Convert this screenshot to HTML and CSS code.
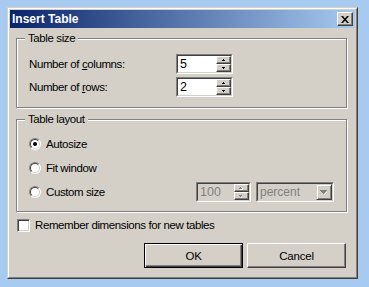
FILE: index.html
```html
<!DOCTYPE html>
<html>
<head>
<meta charset="utf-8">
<link rel="stylesheet" href="styles.css">
</head>
<body>
<div class="window">
  <div class="window-inner">
    <div class="titlebar">
      <span class="title">Insert Table</span>
      <span class="close"><svg width="8" height="7" viewBox="0 0 8 7"><path d="M0 0h2l2 2.4L6 0h2L5 3.5 8 7H6L4 4.6 2 7H0l3-3.5z" fill="#000"/></svg></span>
    </div>
    <div class="content">
      <div class="group g1">
        <div class="legend">Table size</div>
        <div class="fields">
          <span>Number of <u>c</u>olumns:</span>
          <div class="spin">
            <div class="spin-inner">
              <span class="spin-val">5</span>
              <div class="spin-btns">
                <span class="sbtn"><svg width="3" height="2" viewBox="0 0 3 2"><path d="M1 0h1v1h1v1H0V1h1z" fill="#000"/></svg></span>
                <span class="sbtn"><svg width="3" height="2" viewBox="0 0 3 2"><path d="M0 0h3v1H2v1H1V1H0z" fill="#000"/></svg></span>
              </div>
            </div>
          </div>
          <span>Number of <u>r</u>ows:</span>
          <div class="spin">
            <div class="spin-inner">
              <span class="spin-val">2</span>
              <div class="spin-btns">
                <span class="sbtn"><svg width="3" height="2" viewBox="0 0 3 2"><path d="M1 0h1v1h1v1H0V1h1z" fill="#000"/></svg></span>
                <span class="sbtn"><svg width="3" height="2" viewBox="0 0 3 2"><path d="M0 0h3v1H2v1H1V1H0z" fill="#000"/></svg></span>
              </div>
            </div>
          </div>
        </div>
      </div>
      <div class="group g2">
        <div class="legend">Table layout</div>
        <div class="options">
          <div class="opt"><span class="radio checked"></span><span>Autosize</span></div>
          <div class="opt"><span class="radio"></span><span>Fit window</span></div>
          <div class="opt custom">
            <div class="opt-label"><span class="radio"></span><span>Custom size</span></div>
            <div class="spin small disabled">
              <div class="spin-inner">
                <span class="spin-val">100</span>
                <div class="spin-btns">
                  <span class="sbtn"><svg width="4" height="3" viewBox="0 0 4 3"><path d="M1 0h1v1h1v1H0V1h1z" fill="#808080"/><path d="M3 1h1v2H1V2h2z" fill="#fff"/></svg></span>
                  <span class="sbtn"><svg width="4" height="3" viewBox="0 0 4 3"><path d="M0 0h3v1H2v1H1V1H0z" fill="#808080"/><path d="M3 1h1v0H3zM2 2h1v1H2z" fill="#fff"/></svg></span>
                </div>
              </div>
            </div>
            <div class="combo">
              <div class="combo-inner">
                <span class="combo-val">percent</span>
                <span class="combo-btn"><svg width="8" height="5" viewBox="0 0 8 5"><path d="M0 0h7v1H6v1H5v1H4v1H3V3H2V2H1V1H0z" fill="#808080"/><path d="M7 1h1v0zM6 2h1v1H6zM5 3h1v1H5zM4 4h1v1H4z" fill="#fff"/></svg></span>
              </div>
            </div>
          </div>
        </div>
      </div>
      <div class="check-row"><span class="checkbox"></span><span>Remember dimensions for new tables</span></div>
      <div class="buttons">
        <button class="btn default">OK</button>
        <button class="btn">Cancel</button>
      </div>
    </div>
  </div>
</div>
</body>
</html>
```
FILE: styles.css
```css
* { box-sizing: border-box; }
html, body { margin: 0; }
body {
  width: 369px;
  height: 287px;
  overflow: hidden;
  background: #a6caf0;
  padding: 7px 0 0 7px;
  font-family: "Liberation Sans", Arial, sans-serif;
  font-size: 11.5px;
  letter-spacing: -0.4px;
  color: #000;
}
.window {
  width: 351px;
  height: 272px;
  background: #d4d0c8;
  border: 1px solid;
  border-color: #d4d0c8 #404040 #404040 #d4d0c8;
}
.window-inner {
  height: 100%;
  border: 1px solid;
  border-color: #fff #808080 #808080 #fff;
  padding: 1px;
}
.titlebar {
  height: 18px;
  background: linear-gradient(to right, #0a246a, #a6caf0);
  display: flex;
  align-items: center;
  justify-content: space-between;
  padding: 0 2px;
}
.title {
  color: #fff;
  font-weight: bold;
  font-size: 12px;
  letter-spacing: 0;
}
.close {
  width: 16px;
  height: 14px;
  background: #d4d0c8;
  border: 1px solid;
  border-color: #fff #404040 #404040 #fff;
  box-shadow: inset -1px -1px 0 #808080;
  display: flex;
  align-items: center;
  justify-content: center;
  padding-right: 1px;
}
.close svg { display: block; }
.content {
  padding: 0 8px 0 6px;
}
.group {
  border: 1px solid #808080;
  box-shadow: 1px 1px 0 #fff, inset 1px 1px 0 #fff;
}
.g1 { margin-top: 10px; height: 70px; }
.g2 { margin-top: 11px; height: 93px; }
.legend {
  display: table;
  margin: -8px 0 0 8px;
  padding: 0 3px;
  background: #d4d0c8;
  line-height: 14px;
}
.fields {
  display: grid;
  grid-template-columns: 147px 57px;
  row-gap: 3px;
  align-items: center;
  margin: 9px 0 0 12px;
}
.spin {
  height: 20px;
  border: 1px solid;
  border-color: #808080 #fff #fff #808080;
  background: #fff;
}
.spin-inner {
  height: 100%;
  border: 1px solid;
  border-color: #404040 #d4d0c8 #d4d0c8 #404040;
  display: flex;
  align-items: stretch;
}
.spin-val {
  flex: 1;
  padding-left: 2px;
  font-size: 12.5px;
  line-height: 16px;
  letter-spacing: 0;
}
.spin-btns {
  width: 15px;
  display: flex;
  flex-direction: column;
}
.sbtn {
  flex: 1;
  background: #d4d0c8;
  border: 1px solid;
  border-color: #fff #404040 #404040 #fff;
  box-shadow: inset -1px -1px 0 #808080;
  display: flex;
  align-items: center;
  justify-content: center;
  padding-right: 1px;
}
.sbtn svg { display: block; }
.spin.small { width: 55px; }
.spin.disabled { background: #d4d0c8; }
.spin.disabled .spin-val { color: #808080; }
.options {
  display: flex;
  flex-direction: column;
  gap: 4px;
  margin: 8px 0 0 12px;
}
.opt {
  height: 20px;
  display: flex;
  align-items: center;
  gap: 5px;
}
.opt.custom { gap: 0; }
.opt-label {
  width: 167px;
  display: flex;
  align-items: center;
  gap: 5px;
}
.radio {
  position: relative;
  width: 12px;
  height: 12px;
  border-radius: 50%;
  border: 1px solid;
  border-color: #808080 #fff #fff #808080;
  background: #fff;
  flex: none;
}
.radio::before {
  content: "";
  position: absolute;
  inset: 0;
  border-radius: 50%;
  border: 1px solid;
  border-color: #404040 #d4d0c8 #d4d0c8 #404040;
}
.radio.checked::after {
  content: "";
  position: absolute;
  left: 3px;
  top: 3px;
  width: 4px;
  height: 4px;
  border-radius: 50%;
  background: #000;
}
.combo {
  width: 78px;
  height: 20px;
  margin-left: 5px;
  border: 1px solid;
  border-color: #808080 #fff #fff #808080;
  background: #d4d0c8;
}
.combo-inner {
  height: 100%;
  border: 1px solid;
  border-color: #404040 #d4d0c8 #d4d0c8 #404040;
  display: flex;
  align-items: stretch;
}
.combo-val {
  flex: 1;
  color: #808080;
  padding-left: 2px;
  font-size: 12px;
  line-height: 16px;
  letter-spacing: 0;
}
.combo-btn {
  width: 16px;
  background: #d4d0c8;
  border: 1px solid;
  border-color: #d4d0c8 #404040 #404040 #d4d0c8;
  box-shadow: inset 1px 1px 0 #fff, inset -1px -1px 0 #808080;
  display: flex;
  align-items: center;
  justify-content: center;
}
.combo-btn svg { display: block; }
.check-row {
  margin: 6px 0 0 1px;
  display: flex;
  align-items: center;
  gap: 5px;
  height: 14px;
}
.checkbox {
  width: 13px;
  height: 13px;
  border: 1px solid;
  border-color: #808080 #fff #fff #808080;
  background: #fff;
  box-shadow: inset 1px 1px 0 #404040, inset -1px -1px 0 #d4d0c8;
  flex: none;
}
.buttons {
  margin-top: 11px;
  display: flex;
  justify-content: flex-end;
  gap: 4px;
  padding-right: 1px;
}
.btn {
  width: 99px;
  height: 25px;
  padding: 0;
  margin: 0;
  background: #d4d0c8;
  border: 1px solid;
  border-color: #fff #404040 #404040 #fff;
  box-shadow: inset -1px -1px 0 #808080;
  font-family: "Liberation Sans", Arial, sans-serif;
  font-size: 11.5px;
  letter-spacing: -0.2px;
  color: #000;
}
.btn.default {
  border: 1px solid #000;
  box-shadow: inset 1px 1px 0 #fff, inset -1px -1px 0 #404040, inset -2px -2px 0 #808080;
}
```
